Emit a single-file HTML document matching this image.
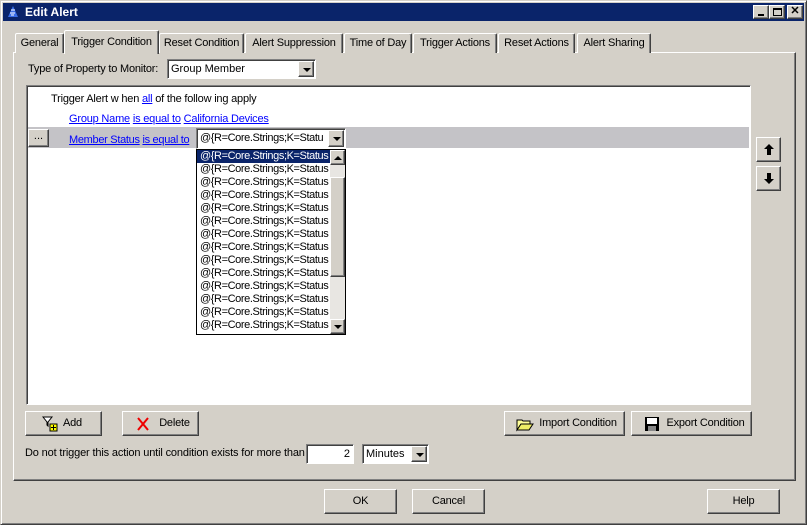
<!DOCTYPE html>
<html><head><style>
*{box-sizing:border-box}
body{margin:0;width:807px;height:525px;background:#d4d0c8;font-family:"Liberation Sans",Tahoma,sans-serif;font-size:11px;color:#000;position:relative;overflow:hidden}
.a{position:absolute}
.rz{border:1px solid;border-color:#fff #404040 #404040 #fff;box-shadow:inset -1px -1px 0 #808080;background:#d4d0c8}
.sk{border:1px solid;border-color:#808080 #fff #fff #808080;box-shadow:inset 1px 1px 0 #404040;background:#fff}
.tab{position:absolute;top:33px;height:20px;border:1px solid;border-color:#fff #404040 transparent #fff;border-bottom:none;box-shadow:inset -1px 0 0 #808080;text-align:center;line-height:18px;border-radius:2px 2px 0 0;background:#d4d0c8;letter-spacing:-0.2px;white-space:nowrap}
.l{color:#00f;text-decoration:underline}
.btn{text-align:center;line-height:22px;letter-spacing:-0.2px}
.item{height:13px;line-height:13px;padding-left:3px;white-space:nowrap;overflow:hidden;letter-spacing:-0.4px}
.dd{position:absolute;right:1px;top:1px;bottom:1px;width:16px}
.tri{position:absolute;left:4px;top:6px;width:0;height:0;border-left:4px solid transparent;border-right:4px solid transparent;border-top:4px solid #000}
</style></head><body>
<div class="a" style="left:0;top:0;width:807px;height:525px;border:1px solid;border-color:#d4d0c8 #404040 #404040 #d4d0c8;box-shadow:inset 1px 1px 0 #fff,inset -1px -1px 0 #808080"></div>
<div class="a" style="left:3px;top:3px;width:801px;height:18px;background:#0a246a;color:#fff;font-weight:bold;font-size:12px;line-height:18px;padding-left:22px">Edit Alert</div>
<svg class="a" style="left:7px;top:5px" width="12" height="14"><path d="M6 1 L11 12 L1 12 Z" fill="#3a6ee8"/><path d="M4 5h4M3 8h5M4 10h3" stroke="#fff"/></svg>
<div class="a rz" style="left:753px;top:5px;width:16px;height:14px"><div class="a" style="left:4px;top:8px;width:6px;height:2px;background:#000"></div></div>
<div class="a rz" style="left:769px;top:5px;width:16px;height:14px"><div class="a" style="left:3px;top:2px;width:9px;height:8px;border:1px solid #000;border-top-width:2px"></div></div>
<div class="a rz" style="left:787px;top:5px;width:16px;height:14px;font-weight:bold;font-size:11px;text-align:center;line-height:11px">✕</div>

<div class="a" style="left:13px;top:52px;width:783px;height:429px;border:1px solid;border-color:#fff #404040 #404040 #fff;box-shadow:inset -1px -1px 0 #808080"></div>
<div class="tab" style="left:15px;width:49px">General</div>
<div class="tab" style="left:64px;top:30px;height:24px;width:95px;z-index:2;line-height:22px">Trigger Condition</div>
<div class="tab" style="left:159px;width:85px">Reset Condition</div>
<div class="tab" style="left:245px;width:98px">Alert Suppression</div>
<div class="tab" style="left:344px;width:68px">Time of Day</div>
<div class="tab" style="left:413px;width:84px">Trigger Actions</div>
<div class="tab" style="left:498px;width:77px">Reset Actions</div>
<div class="tab" style="left:577px;width:74px">Alert Sharing</div>

<div class="a" style="left:28px;top:63px;letter-spacing:-0.2px">Type of Property to Monitor:</div>
<div class="a sk" style="left:167px;top:59px;width:149px;height:20px;padding:3px 0 0 3px">Group Member<div class="dd rz"><div class="tri"></div></div></div>

<div class="a sk" style="left:26px;top:85px;width:725px;height:320px"></div>
<div class="a" style="left:51px;top:93px;letter-spacing:-0.2px">Trigger Alert w hen <span class="l">all</span> of the follow ing apply</div>
<div class="a" style="left:69px;top:113px;letter-spacing:-0.2px"><span class="l">Group Name</span> <span class="l">is equal to</span> <span class="l">California Devices</span></div>
<div class="a" style="left:28px;top:127px;width:721px;height:21px;background:#c4c3c7"></div>
<div class="a rz" style="left:28px;top:129px;width:21px;height:18px;text-align:center;line-height:13px">...</div>
<div class="a" style="left:69px;top:134px;letter-spacing:-0.3px"><span class="l">Member Status</span> <span class="l">is equal to</span></div>
<div class="a sk" style="left:196px;top:128px;width:150px;height:21px;padding:3px 0 0 3px;white-space:nowrap;overflow:hidden;letter-spacing:-0.4px">@{R=Core.Strings;K=Statu<div class="dd rz"><div class="tri"></div></div></div>
<div class="a" style="left:196px;top:149px;width:150px;height:186px;border:1px solid #000;background:#fff;overflow:hidden">
<div style="width:133px">
<div class="item" style="background:#0a246a;color:#fff">@{R=Core.Strings;K=Status</div>
<div class="item">@{R=Core.Strings;K=Status</div><div class="item">@{R=Core.Strings;K=Status</div><div class="item">@{R=Core.Strings;K=Status</div><div class="item">@{R=Core.Strings;K=Status</div><div class="item">@{R=Core.Strings;K=Status</div><div class="item">@{R=Core.Strings;K=Status</div><div class="item">@{R=Core.Strings;K=Status</div><div class="item">@{R=Core.Strings;K=Status</div><div class="item">@{R=Core.Strings;K=Status</div><div class="item">@{R=Core.Strings;K=Status</div><div class="item">@{R=Core.Strings;K=Status</div><div class="item">@{R=Core.Strings;K=Status</div><div class="item">@{R=Core.Strings;K=Status</div>
</div>
<div class="a" style="left:133px;top:0;width:15px;height:184px;background:#e8e6e2"></div>
<div class="a rz" style="left:133px;top:0;width:15px;height:15px"><div class="a" style="left:3px;top:5px;border-left:4px solid transparent;border-right:4px solid transparent;border-bottom:4px solid #000"></div></div>
<div class="a rz" style="left:133px;top:27px;width:15px;height:100px"></div>
<div class="a rz" style="left:133px;top:169px;width:15px;height:15px"><div class="tri" style="left:3px;top:5px"></div></div>
</div>

<div class="a rz" style="left:756px;top:137px;width:25px;height:25px"><svg class="a" style="left:6px;top:5px" width="12" height="13"><path d="M6 1 L11 6 H8 V12 H4 V6 H1 Z" fill="#000"/></svg></div>
<div class="a rz" style="left:756px;top:166px;width:25px;height:25px"><svg class="a" style="left:6px;top:5px" width="12" height="13"><path d="M6 12 L11 7 H8 V1 H4 V7 H1 Z" fill="#000"/></svg></div>

<div class="a rz btn" style="left:25px;top:411px;width:77px;height:25px"><svg class="a" style="left:16px;top:4px" width="16" height="16"><path d="M1 1h9l-4 5v4l-1-1V6Z" fill="#fff" stroke="#000"/><rect x="8" y="8" width="7" height="7" fill="#ff0" stroke="#000"/><path d="M11.5 9v5M9 11.5h5" stroke="#000"/></svg><span style="margin-left:18px">Add</span></div>
<div class="a rz btn" style="left:122px;top:411px;width:77px;height:25px"><svg class="a" style="left:13px;top:5px" width="14" height="14"><path d="M2 1L12 13M12 1L2 13" stroke="#e00" stroke-width="2"/></svg><span style="margin-left:28px">Delete</span></div>
<div class="a rz btn" style="left:504px;top:411px;width:121px;height:25px"><svg class="a" style="left:11px;top:4px" width="18" height="16"><path d="M1 4h5l1 1h7v3H5L1 14Z" fill="#ff9" stroke="#000"/><path d="M1 14L5 8h12l-4 6Z" fill="#ee6" stroke="#000"/></svg><span style="margin-left:27px">Import Condition</span></div>
<div class="a rz btn" style="left:631px;top:411px;width:121px;height:25px"><svg class="a" style="left:12px;top:4px" width="16" height="16"><rect x="1" y="1" width="14" height="14" fill="#000"/><rect x="3" y="2" width="10" height="6" fill="#fff"/><rect x="4" y="10" width="8" height="5" fill="#888"/></svg><span style="margin-left:28px">Export Condition</span></div>

<div class="a" style="left:25px;top:447px;font-size:11px;letter-spacing:-0.15px;white-space:nowrap">Do not trigger this action until condition exists for more than</div>
<div class="a sk" style="left:306px;top:444px;width:48px;height:20px;text-align:right;padding:3px 3px 0 0">2</div>
<div class="a sk" style="left:362px;top:444px;width:67px;height:20px;padding:3px 0 0 3px">Minutes<div class="dd rz"><div class="tri"></div></div></div>

<div class="a rz btn" style="left:324px;top:489px;width:73px;height:25px">OK</div>
<div class="a rz btn" style="left:412px;top:489px;width:73px;height:25px">Cancel</div>
<div class="a rz btn" style="left:707px;top:489px;width:73px;height:25px">Help</div>
</body></html>
